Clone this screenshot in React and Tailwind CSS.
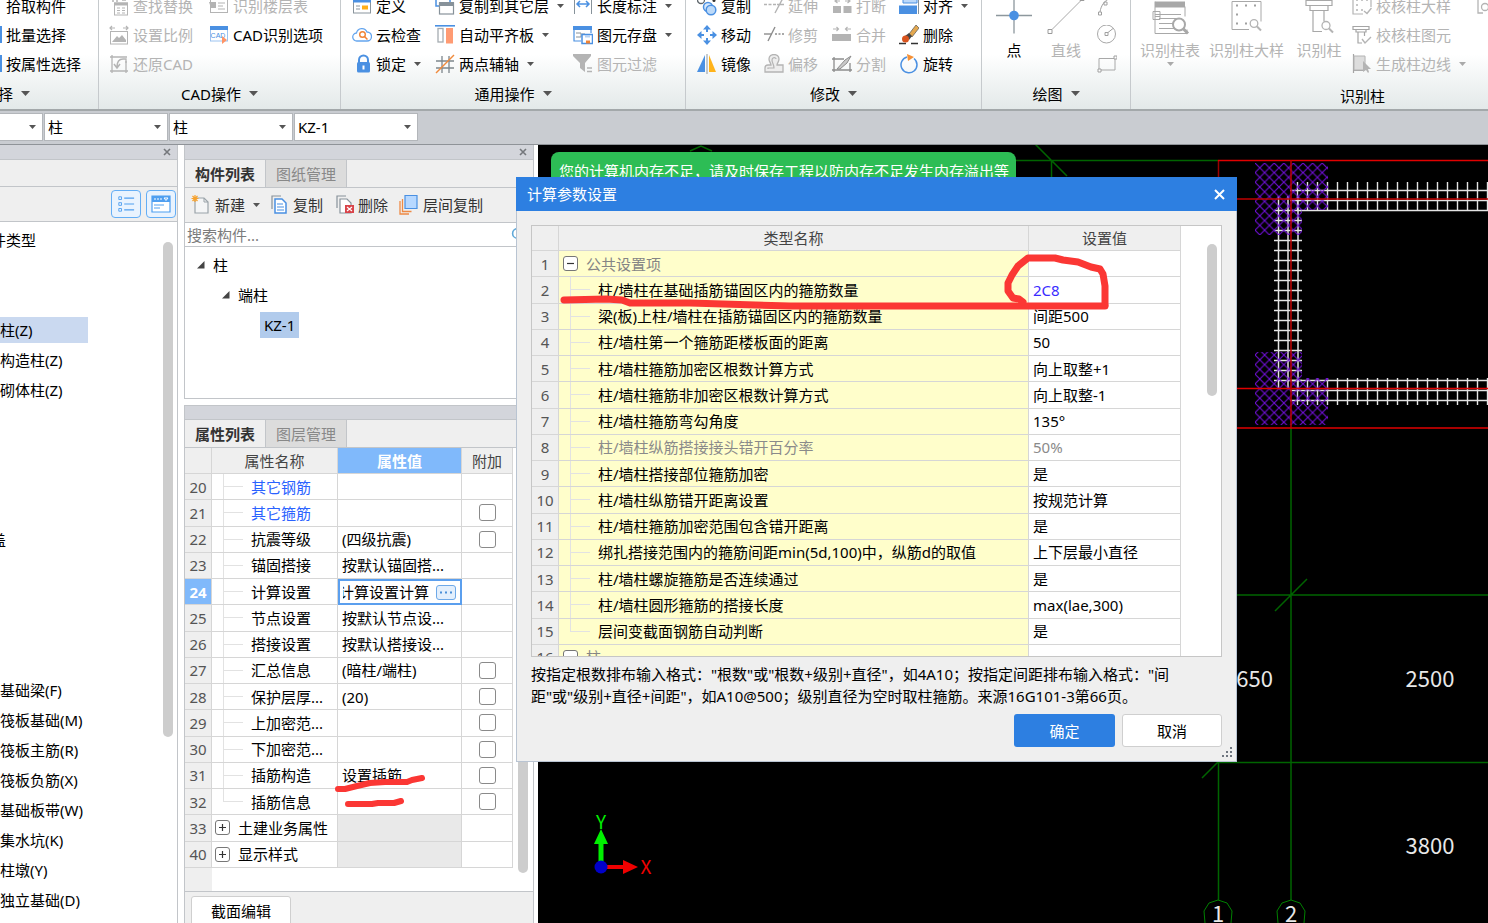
import { useState } from "react";

const BLUE = "#4a90e2";
const GRAY = "#b4b4b4";

function Icon({ children, className = "h-5 w-5" }) {
  return (
    <svg className={`shrink-0 ${className}`} viewBox="0 0 20 20" fill="none" aria-hidden="true">
      {children}
    </svg>
  );
}

function Caret({ color = "#555", small = false }) {
  return (
    <svg className={`shrink-0 ${small ? "h-1 w-[7px]" : "h-[5px] w-[9px]"}`} viewBox="0 0 9 5" preserveAspectRatio="none" aria-hidden="true">
      <path d="M0 0h9L4.500 5z" fill={color} />
    </svg>
  );
}

const icons = {
  pick: <Icon />,
  batch: <Icon><rect x="3" y="2" width="16" height="15" stroke={BLUE} strokeWidth="2" /><path d="M3 3h17" stroke={BLUE} strokeWidth="4" /></Icon>,
  findReplace: (
    <Icon>
      <path d="M4 6v-6h4v6M11 1h5v3M13 4h4" stroke={GRAY} strokeWidth="1.500" />
      <rect x="5.500" y="7" width="13" height="12" stroke={GRAY} />
      <path d="M5 8h14" stroke={GRAY} strokeWidth="3" />
      <path d="M8 12h3M8 14.500h3M8 17h3M13 12h3M13 14.500h3M13 17h3" stroke={GRAY} strokeWidth="1.200" />
    </Icon>
  ),
  scale: (
    <Icon>
      <path d="M1 3h5M3 1L1 3l2 2M19 3h-5M17 1l2 2-2 2" stroke={GRAY} strokeWidth="1.200" />
      <rect x="1.500" y="6.500" width="17" height="12.500" stroke={GRAY} />
      <path d="M3 17l5-6 2 2 3-3 4 5v2z" fill={GRAY} />
    </Icon>
  ),
  restore: (
    <Icon>
      <path d="M3 1v18M1 3h17M17 7v12M1 17h18" stroke={GRAY} strokeWidth="1.300" />
      <path d="M14 5c-4 0-6 3-6 8M5 10l3 4 3-4" stroke={GRAY} strokeWidth="1.500" />
      <path d="M14 5h3v4" stroke={GRAY} strokeWidth="1.300" />
    </Icon>
  ),
  floorTable: (
    <Icon>
      <rect x="1.500" y="3" width="17" height="13.500" stroke={GRAY} />
      <path d="M0 6h7v6H2z" fill={GRAY} />
      <path d="M9 7h7M9 10h5M9 13h7" stroke={GRAY} strokeWidth="1.200" />
    </Icon>
  ),
  cad: (
    <Icon>
      <rect x="1.500" y="2" width="17" height="14" fill="#fff" stroke="#9cc3f0" />
      <path d="M1 3h18" stroke={BLUE} strokeWidth="4" />
      <text x="9" y="13" textAnchor="middle" fontSize="7" fontFamily="Liberation Sans, sans-serif" fill={BLUE}>CAD</text>
      <path d="M13 11l5 4-5 4z" fill="#ff9466" />
    </Icon>
  ),
  define: (
    <Icon>
      <rect x="1.500" y="2" width="17" height="15" fill="#fff" stroke="#8a959d" />
      <path d="M1 4.500h18" stroke={BLUE} strokeWidth="4" />
      <path d="M4 10h4M4 13h4" stroke="#8a959d" />
      <path d="M10 11.500h6" stroke="#ffae19" strokeWidth="4" />
    </Icon>
  ),
  cloud: (
    <Icon>
      <path d="M5 16a4 4 0 0 1-.5-8A5.500 5.500 0 0 1 15 7a4.500 4.500 0 0 1 0 9z" stroke="#64a5ee" strokeWidth="1.300" />
      <circle cx="10.500" cy="9.500" r="2.800" stroke="#f08334" strokeWidth="1.400" />
      <path d="M12.500 11.500l3 3" stroke="#f08334" strokeWidth="1.500" />
    </Icon>
  ),
  lock: (
    <Icon>
      <path d="M7 9V6a4.500 4.500 0 0 1 9 0v3" stroke={BLUE} strokeWidth="2" />
      <rect x="5" y="8" width="13" height="10.500" rx="1.500" fill={BLUE} />
      <path d="M11.500 11.500v4" stroke="#fff" strokeWidth="2" />
    </Icon>
  ),
  copyFloor: (
    <Icon>
      <rect x="1" y="-3" width="14" height="13" stroke={BLUE} strokeWidth="1.500" />
      <rect x="4.500" y="7" width="14" height="11" fill="#fff" stroke="#87929a" strokeWidth="1.200" />
      <path d="M4 8h15" stroke="#87929a" strokeWidth="4" />
    </Icon>
  ),
  alignSlab: (
    <Icon>
      <path d="M0 .800h20" stroke={BLUE} strokeWidth="1.600" />
      <rect x="3" y="3.500" width="5" height="13.500" stroke="#a5acb1" strokeWidth="1.300" />
      <path d="M11 3h7v15.500h-7z" fill="#ff9b73" />
    </Icon>
  ),
  axis: (
    <Icon>
      <path d="M7 2v17M14 2v17M1 7h18M1 14h18" stroke="#7d868c" strokeWidth="1.300" />
      <path d="M1 19L19 1" stroke="#f08a3c" strokeWidth="1.500" />
    </Icon>
  ),
  measure: (
    <Icon>
      <path d="M1.500-2v20M18.500-2v20" stroke="#87929a" />
      <path d="M4 8h12M7 5L4 8l3 3M13 5l3 3-3 3" stroke={BLUE} strokeWidth="1.500" />
    </Icon>
  ),
  save: (
    <Icon>
      <path d="M8 16H1V2h17v6" stroke={BLUE} strokeWidth="1.200" />
      <path d="M0 3h19" stroke={BLUE} strokeWidth="4" />
      <path d="M3 8h5v4H3M9 9h3" stroke="#87929a" />
      <rect x="9" y="9.500" width="10.500" height="9" fill="#fff" stroke={BLUE} strokeWidth="1.500" />
      <path d="M12 10h5v2.500h-5z" fill="#b7d2f3" />
      <path d="M13 17h4" stroke="#f08334" strokeWidth="3" />
    </Icon>
  ),
  filter: (
    <Icon>
      <path d="M0 0h18v2l-6 7v9l-5-4V9L0 2z" fill={GRAY} />
      <path d="M14 14h5M14 17.500h5" stroke={GRAY} strokeWidth="1.300" />
    </Icon>
  ),
  copy: (
    <Icon>
      <circle cx="4" cy="4" r="3.500" stroke="#5f676c" strokeWidth="1.300" />
      <circle cx="17" cy="4.500" r="1.500" fill="#333" />
      <circle cx="11" cy="11" r="4.500" fill="#d8e9fb" stroke={BLUE} strokeWidth="1.500" />
      <circle cx="14" cy="14" r="4.800" fill="#bcd9f8" stroke={BLUE} strokeWidth="1.500" />
    </Icon>
  ),
  move: (
    <Icon>
      <path d="M10 0l4 4.500h-3V7H9V4.500H6zM10 20l4-4.500h-3V13H9v2.500H6zM0 10l4.500-4v3H7v2H4.500v3zM20 10l-4.500-4v3H13v2h2.500v3z" fill={BLUE} />
    </Icon>
  ),
  mirror: (
    <Icon>
      <path d="M8 1v17H0z" fill={BLUE} />
      <path d="M12 1v17h7z" fill="#ffb31a" />
      <path d="M10 0v20" stroke="#8f989e" />
    </Icon>
  ),
  extend: (
    <Icon>
      <path d="M0 8.500h12" stroke={GRAY} strokeWidth="1.400" strokeDasharray="3 1.500" />
      <path d="M13 8.500h7M19 2l-8 15" stroke={GRAY} strokeWidth="1.400" />
    </Icon>
  ),
  trim: (
    <Icon>
      <path d="M0 9h8" stroke="#8d8d8d" strokeWidth="1.400" />
      <path d="M11 9h9" stroke="#8d8d8d" strokeWidth="1.400" strokeDasharray="2 1.500" />
      <path d="M11 2L4 16" stroke="#8d8d8d" strokeWidth="1.400" />
    </Icon>
  ),
  offset: (
    <Icon>
      <path d="M1 18v-4c0-2 1-3 3-3h3c0-2-2-3-2-6 0-6 10-6 10 0 0 3-2 4-2 6h6v7z" fill="#ededed" stroke={GRAY} strokeWidth="1.300" />
      <path d="M4 15v-1h6c0-4-2-5-2-8 0-3 4-3 4-1" stroke={GRAY} strokeWidth="1.200" />
    </Icon>
  ),
  breakApart: (
    <Icon>
      <path d="M1 10h8v7H1zM11.500 10h8v7h-8z" fill={GRAY} />
      <path d="M3 5h5M5.500 3L3 5l2.500 2M18 5h-5M15.500 3L18 5l-2.500 2" stroke={GRAY} strokeWidth="1.200" />
    </Icon>
  ),
  merge: (
    <Icon>
      <path d="M0 9h19v7H0z" fill={GRAY} />
      <path d="M1 4h6M4.500 2l2 2-2 2M19 4h-6M15.500 2l-2 2 2 2" stroke={GRAY} strokeWidth="1.200" />
    </Icon>
  ),
  split: (
    <Icon>
      <path d="M2 3v15M0 5h12M0 16h20M18 9v9" stroke="#8d8d8d" strokeWidth="1.300" />
      <path d="M5 15l8-9 6-4-4 7-7 6z" fill="#c9c9c9" stroke="#8d8d8d" />
    </Icon>
  ),
  align: (
    <Icon>
      <path d="M19.500 0v18" stroke="#87929a" />
      <path d="M4-4h14V7H4z" fill="#bcd9fa" stroke={BLUE} />
      <path d="M0 9.500h18V18H0z" fill={BLUE} />
    </Icon>
  ),
  erase: (
    <Icon>
      <path d="M0 18.500h7M12 18.500h7" stroke="#333" strokeWidth="1.300" />
      <path d="M10 9l7-9 3 3-7 9z" fill="#e4a84f" stroke="#555" strokeWidth=".700" />
      <path d="M6 11l4-3 3 3-3 4z" fill="#444" />
      <circle cx="6.500" cy="14" r="3.500" fill="#d9541e" />
    </Icon>
  ),
  rotate: (
    <Icon>
      <path d="M15 4.500a8 8 0 1 1-7-1.500" stroke={BLUE} strokeWidth="1.500" />
      <path d="M8 0l7 3-6 4z" fill="#f59036" />
    </Icon>
  ),
  checkSample: (
    <Icon>
      <path d="M11 18H1V-2h18v13" stroke={GRAY} strokeWidth="1.200" />
      <path d="M4 4h2M9 4h2M14 4h2M4 9h2M4 14h2M9 14h2" stroke={GRAY} strokeWidth="1.500" />
      <path d="M12 15l3 2.500L19.500 12" stroke={GRAY} strokeWidth="1.400" />
    </Icon>
  ),
  checkElement: (
    <Icon>
      <path d="M1 1.500h16v3H1zM4 4.500h10v2.500H4zM6 7v11h4M12.500 7v4" stroke="#a5a5a5" strokeWidth="1.200" />
      <path d="M10 14l3 4 6-6" stroke={GRAY} strokeWidth="1.400" />
    </Icon>
  ),
  edge: (
    <Icon>
      <path d="M1.500 0v19M1 16.500h10M12.500 3v5" stroke="#a5a5a5" strokeWidth="1.200" />
      <path d="M2 2h11v14H2z" fill="#ddd" stroke={GRAY} />
      <path d="M11 7v11l3-2 2 3 1-1-1-3h3z" fill={GRAY} />
    </Icon>
  ),
  moreColumn: (
    <Icon>
      <path d="M0-1h16v4H0zM4 3v14h5" stroke={GRAY} strokeWidth="1.300" />
      <circle cx="11" cy="11" r="3.500" stroke={GRAY} strokeWidth="1.300" />
    </Icon>
  ),
};

function Tool({ icon, label, disabled, caret }) {
  return (
    <button type="button" disabled={disabled} className={`flex h-[29px] items-center gap-1 whitespace-nowrap ${disabled ? "text-[#b4b4b4]" : "text-black"}`}>
      {icons[icon]}
      <span>{label}</span>
      {caret && <span className="ml-1"><Caret small color={disabled ? "#aaa" : "#555"} /></span>}
    </button>
  );
}

function ToolColumn({ tools, className = "" }) {
  return (
    <div className={`flex shrink-0 flex-col items-start ${className}`}>
      {tools.map((t) => <Tool key={t.label} {...t} />)}
    </div>
  );
}

function BigTool({ label, disabled, caret, className, children }) {
  return (
    <button type="button" disabled={disabled} className={`flex shrink-0 flex-col items-center whitespace-nowrap ${className} ${disabled ? "text-[#b4b4b4]" : "text-black"}`}>
      <svg className="h-[47px] w-10" viewBox="0 0 40 46" fill="none" aria-hidden="true">{children}</svg>
      <span className="leading-6">{label}</span>
      {caret && <Caret small color="#aaa" />}
    </button>
  );
}

function Group({ title, className, caret = true, children }) {
  return (
    <section className={`flex shrink-0 flex-col border-r border-[#c6cacd] ${className}`}>
      <div className="flex h-[87px]">{children}</div>
      <button type="button" className={`flex h-8 items-center justify-center gap-2 ${caret ? "pb-px" : "pt-1"}`}>
        {title}
        {caret && <Caret />}
      </button>
    </section>
  );
}

function Ribbon() {
  return (
    <header className="h-[111px] shrink-0 overflow-hidden border-b-2 border-[#a3a8aa] bg-linear-to-b from-white from-50% to-[#e3e9e9]">
      <div className="-mt-[9px] flex">
        <Group title="选择" className="-ml-[85px] w-[184px]">
          <ToolColumn className="pl-[67px]" tools={[
            { icon: "pick", label: "拾取构件" },
            { icon: "batch", label: "批量选择" },
            { icon: "batch", label: "按属性选择" },
          ]} />
        </Group>
        <Group title="CAD操作" className="w-[242px]">
          <ToolColumn className="w-[110px] pl-[10px]" tools={[
            { icon: "findReplace", label: "查找替换", disabled: true },
            { icon: "scale", label: "设置比例", disabled: true },
            { icon: "restore", label: "还原CAD", disabled: true },
          ]} />
          <ToolColumn tools={[
            { icon: "floorTable", label: "识别楼层表", disabled: true },
            { icon: "cad", label: "CAD识别选项" },
          ]} />
        </Group>
        <Group title="通用操作" className="w-[345px]">
          <ToolColumn className="w-[94px] pl-[11px]" tools={[
            { icon: "define", label: "定义" },
            { icon: "cloud", label: "云检查" },
            { icon: "lock", label: "锁定", caret: true },
          ]} />
          <ToolColumn className="w-[138px]" tools={[
            { icon: "copyFloor", label: "复制到其它层", caret: true },
            { icon: "alignSlab", label: "自动平齐板", caret: true },
            { icon: "axis", label: "两点辅轴", caret: true },
          ]} />
          <ToolColumn tools={[
            { icon: "measure", label: "长度标注", caret: true },
            { icon: "save", label: "图元存盘", caret: true },
            { icon: "filter", label: "图元过滤", disabled: true },
          ]} />
        </Group>
        <Group title="修改" className="w-[296px]">
          <ToolColumn className="w-[78px] pl-[11px]" tools={[
            { icon: "copy", label: "复制" },
            { icon: "move", label: "移动" },
            { icon: "mirror", label: "镜像" },
          ]} />
          <ToolColumn className="w-[68px]" tools={[
            { icon: "extend", label: "延伸", disabled: true },
            { icon: "trim", label: "修剪", disabled: true },
            { icon: "offset", label: "偏移", disabled: true },
          ]} />
          <ToolColumn className="w-[67px]" tools={[
            { icon: "breakApart", label: "打断", disabled: true },
            { icon: "merge", label: "合并", disabled: true },
            { icon: "split", label: "分割", disabled: true },
          ]} />
          <ToolColumn tools={[
            { icon: "align", label: "对齐", caret: true },
            { icon: "erase", label: "删除" },
            { icon: "rotate", label: "旋转" },
          ]} />
        </Group>
        <Group title="绘图" className="w-[149px]">
          <BigTool label="点" className="ml-3 w-10">
            <path d="M20 6v36M2 24h36" stroke="#8d979d" strokeWidth="1.300" />
            <circle cx="20" cy="24" r="4.800" fill={BLUE} />
          </BigTool>
          <BigTool label="直线" disabled className="ml-3 w-10">
            <path d="M6 38L35 9" stroke="#a8a8a8" />
            <path d="M2 38h4v4H2zM34 5h4v4h-4z" stroke="#9a9a9a" />
          </BigTool>
          <div className="ml-[11px] flex flex-col text-[#a8a8a8]">
            <button type="button" aria-label="弧" className="flex h-[29px] items-center">
              <Icon><path d="M3 16C4 9 8 4 14 2M1.500 16h3v3h-3zM7 6h3v3H7z" stroke="#a0a0a0" /></Icon>
            </button>
            <button type="button" aria-label="圆" className="flex h-[29px] items-center">
              <Icon><circle cx="9.500" cy="9" r="9" stroke="#a8a8a8" /><path d="M8 7.500h3v3H8zM11 7.500l5-4" stroke="#a0a0a0" /></Icon>
            </button>
            <button type="button" aria-label="矩形" className="flex h-[29px] items-center">
              <Icon><path d="M2 4.500h16v11.500H2z" stroke="#a8a8a8" /><path d="M17 2h3v3h-3zM1 15h3v3H1z" fill="#fff" stroke="#a0a0a0" /></Icon>
            </button>
          </div>
        </Group>
        <Group title="识别柱" caret={false} className="w-[464px]">
          <BigTool label="识别柱表" disabled caret className="ml-2 w-[62px]">
            <path d="M5 10h30v6H5z" fill="#a8a8a8" />
            <path d="M5 10v32h32v-4M35 15v10M9 23h22M9 27h17M9 32h15M9 37h15" stroke="#a8a8a8" />
            <path d="M3 20h7v8H3zM5 23h5M5 25h5" stroke="#a8a8a8" />
            <circle cx="29" cy="33" r="6" fill="#fff" stroke="#a8a8a8" strokeWidth="2" />
            <path d="M33 37l5 5" stroke="#a8a8a8" strokeWidth="3" />
          </BigTool>
          <BigTool label="识别柱大样" disabled className="ml-2 w-[75px]">
            <path d="M22 38H5V10h29v20" stroke="#a8a8a8" />
            <path d="M9 14h2M18 14h2M27 14h2M9 23h2M9 32h2M18 32h2" stroke="#a0a0a0" strokeWidth="2" />
            <circle cx="27" cy="32" r="3.800" stroke={GRAY} strokeWidth="1.300" />
            <path d="M30 35l4 4" stroke={GRAY} strokeWidth="2" />
          </BigTool>
          <BigTool label="识别柱" disabled className="ml-3 w-[46px]">
            <path d="M7 9h26v5H7zM11 14h18v5H11zM14 19v21h9M25 19v11" stroke="#a8a8a8" strokeWidth="1.200" />
            <circle cx="27" cy="34" r="4" stroke={GRAY} strokeWidth="1.300" />
            <path d="M30 37l4 4" stroke={GRAY} strokeWidth="2" />
          </BigTool>
          <ToolColumn className="ml-[10px] w-[122px]" tools={[
            { icon: "checkSample", label: "校核柱大样", disabled: true },
            { icon: "checkElement", label: "校核柱图元", disabled: true },
            { icon: "edge", label: "生成柱边线", disabled: true, caret: true },
          ]} />
          <div className="flex h-[29px] items-center">{icons.moreColumn}</div>
        </Group>
      </div>
    </header>
  );
}

function Combo({ label, value, className }) {
  return (
    <div className={`relative h-7 border border-[#b3b6ba] bg-white ${className}`}>
      <select aria-label={label} defaultValue={value} className="h-full w-full appearance-none bg-transparent pl-[3px] outline-none">
        <option>{value}</option>
      </select>
      <span className="pointer-events-none absolute inset-y-0 right-[6px] flex items-center"><Caret small /></span>
    </div>
  );
}

function PanelStrip() {
  return (
    <div className="flex h-[15px] shrink-0 items-center justify-end border-b border-[#c2c5c9] bg-[#d3d5db] pr-[6px]">
      <button type="button" aria-label="关闭" className="flex">
        <svg className="h-2 w-2" viewBox="0 0 8 8" aria-hidden="true"><path d="M1 1l6 6M7 1L1 7" stroke="#75787c" strokeWidth="1.600" /></svg>
      </button>
    </div>
  );
}

const componentTypes = [
  { text: "构件类型", shift: "-ml-6" },
  {}, {},
  { text: "柱(Z)", selected: true },
  { text: "构造柱(Z)" },
  { text: "砌体柱(Z)" },
  {}, {}, {}, {},
  { text: "楼盖", shift: "-ml-6" },
  {}, {}, {}, {},
  { text: "基础梁(F)" },
  { text: "筏板基础(M)" },
  { text: "筏板主筋(R)" },
  { text: "筏板负筋(X)" },
  { text: "基础板带(W)" },
  { text: "集水坑(K)" },
  { text: "柱墩(Y)" },
  { text: "独立基础(D)" },
];

function TypePanel() {
  return (
    <aside className="flex w-[178px] shrink-0 flex-col overflow-hidden border-r border-[#c2c5c9] bg-white">
      <PanelStrip />
      <div className="h-[27px] shrink-0 border-b border-[#c2c5c9] bg-[#efefef]" />
      <div className="flex h-[35px] shrink-0 items-center justify-end gap-[5px] border-b border-[#c2c5c9] bg-[#efefef] pr-px">
        <button type="button" aria-label="列表" className="flex h-7 w-[30px] items-center justify-center rounded-sm border border-[#64aef5] bg-[#e9f3fe]">
          <Icon className="h-[18px] w-[18px]">
            <path d="M2 2h3v3H2zM2 8.500h3v3H2zM2 15h3v3H2z" stroke="#4f9ff0" />
            <path d="M8 3.500h11M8 10h11M8 16.500h11" stroke="#4f9ff0" strokeWidth="1.200" />
          </Icon>
        </button>
        <button type="button" aria-label="窗口" className="flex h-7 w-[30px] items-center justify-center rounded-sm border border-[#64aef5] bg-[#e9f3fe]">
          <Icon>
            <path d="M1 2h18v16H1z" fill="#fff" stroke="#4f9ff0" strokeWidth="1.200" />
            <path d="M1 2h18v6H1z" fill="#4f9ff0" />
            <path d="M3 5h2M6 5h2M9 5h2M13 4h4l-2 2.500z" stroke="#fff" />
            <path d="M3 11h10M3 14h6" stroke="#4f9ff0" />
          </Icon>
        </button>
      </div>
      <div className="flex justify-between pr-1">
        <ul className="w-[88px] pt-[3px]">
          {componentTypes.map((t, i) => (
            <li key={i} className="flex h-[30px] items-center whitespace-nowrap">
              <span className={`${t.shift ?? ""} ${t.selected ? "w-full bg-[#cad9f0] leading-[26px]" : ""}`}>{t.text}</span>
            </li>
          ))}
        </ul>
        <div className="mt-5 h-[495px] w-[10px] rounded-full bg-[#cdcdcd]" />
      </div>
    </aside>
  );
}

function Tabs({ items }) {
  return (
    <div className="flex h-7 shrink-0 border-b border-[#c2c5c9] bg-[#efefef]" role="tablist">
      {items.map((label, i) => (
        <button key={label} type="button" role="tab" aria-selected={i === 0}
          className={`w-[81px] border-r border-[#c2c5c9] ${i === 0 ? "font-bold text-[#333]" : "bg-[#dcdcdc] text-[#888]"}`}>
          {label}
        </button>
      ))}
    </div>
  );
}

function ToggleArrow() {
  return <svg className="h-2 w-2 shrink-0" viewBox="0 0 8 8" aria-hidden="true"><path d="M7.500 0v7.500H0z" fill="#444" /></svg>;
}

function ComponentPanel() {
  return (
    <section className="flex h-[254px] shrink-0 flex-col border border-t-0 border-[#c2c5c9] bg-white">
      <PanelStrip />
      <Tabs items={["构件列表", "图纸管理"]} />
      <div className="flex h-[35px] shrink-0 items-center border-b border-[#c2c5c9] bg-[#efefef] pl-[6px] text-[#333]">
        <button type="button" className="flex w-20 items-center gap-1">
          <Icon>
            <path d="M4 3h9l4 4v11H4z" fill="#f4f5f6" stroke="#9aa3a9" strokeWidth="1.200" />
            <path d="M13 3v4h4" stroke="#9aa3a9" />
            <path d="M4 0v7M.500 3.500h7M1.500 1l5 5M6.500 1l-5 5" stroke="#f7a12b" strokeWidth="1.200" />
          </Icon>
          新建
          <span className="ml-1"><Caret small /></span>
        </button>
        <button type="button" className="flex w-[65px] items-center gap-[2px]">
          <Icon>
            <path d="M1 14V1h9" stroke="#87929a" strokeWidth="1.200" />
            <path d="M4 4h7l4 4v10H4z" fill="#fff" stroke={BLUE} strokeWidth="1.500" />
            <path d="M6 9h6M6 12h7M6 15h7" stroke={BLUE} strokeWidth="1.200" />
          </Icon>
          复制
        </button>
        <button type="button" className="flex w-[63px] items-center gap-[2px]">
          <Icon>
            <path d="M1 13V1h9" stroke="#87929a" strokeWidth="1.200" />
            <path d="M4 4h7l4 4v10H4z" fill="#fff" stroke="#87929a" strokeWidth="1.200" />
            <path d="M9 10h9v8H9z" fill="#d9444a" />
            <path d="M11 12l5 4M16 12l-5 4" stroke="#fff" strokeWidth="1.200" />
          </Icon>
          删除
        </button>
        <button type="button" className="flex items-center gap-1">
          <Icon>
            <path d="M1 6v13h9M3.500 4v12.500h9" stroke="#ee8a45" strokeWidth="1.300" />
            <path d="M6 .500h12v13H6z" fill="#b7d8ff" stroke={BLUE} strokeWidth="1.200" />
          </Icon>
          层间复制
        </button>
      </div>
      <div className="flex h-6 shrink-0 items-center justify-between border-b border-[#c2c5c9] pr-[6px]">
        <input type="text" aria-label="搜索构件" placeholder="搜索构件..." className="w-full pl-[2px] outline-none placeholder:text-[#7c7c7c]" />
        <Icon className="h-4 w-4"><circle cx="8" cy="8" r="6" stroke="#5fa8d8" strokeWidth="2" /><path d="M12 12l6 6" stroke="#5fa8d8" strokeWidth="2" /></Icon>
      </div>
      <ul className="pt-[3px]">
        <li className="flex h-[30px] items-center gap-2 pl-3"><ToggleArrow />柱</li>
        <li className="flex h-[30px] items-center gap-2 pl-[37px]"><ToggleArrow />端柱</li>
        <li className="flex h-[30px] items-center pl-[75px]"><span className="bg-[#b1cbec] px-1 leading-[26px]">KZ-1</span></li>
      </ul>
    </section>
  );
}

const properties = [
  { no: 20, name: "其它钢筋", blue: true },
  { no: 21, name: "其它箍筋", blue: true, check: true },
  { no: 22, name: "抗震等级", value: "(四级抗震)", check: true },
  { no: 23, name: "锚固搭接", value: "按默认锚固搭..." },
  { no: 24, name: "计算设置", value: "计算设置计算", active: true },
  { no: 25, name: "节点设置", value: "按默认节点设..." },
  { no: 26, name: "搭接设置", value: "按默认搭接设..." },
  { no: 27, name: "汇总信息", value: "(暗柱/端柱)", check: true },
  { no: 28, name: "保护层厚...", value: "(20)", check: true },
  { no: 29, name: "上加密范...", check: true },
  { no: 30, name: "下加密范...", check: true },
  { no: 31, name: "插筋构造", value: "设置插筋", check: true },
  { no: 32, name: "插筋信息", check: true, last: true },
  { no: 33, name: "土建业务属性", group: true },
  { no: 40, name: "显示样式", group: true },
];

// tree guide: vertical trunk plus the branch to the label
function Guide({ last }) {
  return (
    <>
      <span className={`absolute left-[11px] top-0 border-l border-[#e2e2e2] ${last ? "h-3" : "bottom-0"}`} />
      <span className="absolute left-[11px] top-3 w-5 border-t border-[#e2e2e2]" />
    </>
  );
}

function Expander({ sign }) {
  return (
    <button type="button" aria-label={sign === "+" ? "展开" : "折叠"} className="flex h-[15px] w-[15px] shrink-0 items-center justify-center rounded-[3px] border border-[#777] bg-white">
      <svg className="h-[7px] w-[7px]" viewBox="0 0 7 7" aria-hidden="true">
        <path d={sign === "+" ? "M0 3.500h7M3.500 0v7" : "M0 3.500h7"} stroke="#333" strokeWidth="1.200" />
      </svg>
    </button>
  );
}

function PropertyPanel() {
  const [checked, setChecked] = useState({});
  const cell = "border-r border-b border-[#d6d6d6] p-0";
  return (
    <section className="flex min-h-0 flex-1 flex-col border border-b-0 border-[#c2c5c9] bg-[#efefef]">
      <div className="h-[14px] shrink-0 border-b border-[#c2c5c9] bg-[#d3d5db]" />
      <Tabs items={["属性列表", "图层管理"]} />
      <div className="flex shrink-0 border-b border-[#c2c5c9] bg-white">
        <table className="h-[443px] w-[328px] table-fixed border-separate border-spacing-0 whitespace-nowrap">
          <colgroup>
            <col className="w-[27px]" />
            <col className="w-[126px]" />
            <col className="w-[124px]" />
            <col className="w-[51px]" />
          </colgroup>
          <thead>
            <tr className="h-[26px] bg-[#efefef] text-[#444]">
              <th className={cell} aria-label="序号" />
              <th className={`${cell} font-normal`}>属性名称</th>
              <th className={`${cell} bg-[#80b9fb] font-bold text-white`}>属性值</th>
              <th className={`${cell} font-normal`}>附加</th>
            </tr>
          </thead>
          <tbody>
            {properties.map((p) => (
              <tr key={p.no} className="h-[26px]">
                <td className={`${cell} text-center ${p.active ? "bg-[#80b9fb] font-bold text-white" : "bg-[#efefef] text-[#555]"}`}>{p.no}</td>
                <td className={`${cell} relative`}>
                  {p.group ? (
                    <div className="flex items-center gap-2 pl-[3px]"><Expander sign="+" />{p.name}</div>
                  ) : (
                    <>
                      <Guide last={p.last} />
                      <span className={`pl-[39px] ${p.blue ? "text-[#2a62ff]" : ""}`}>{p.name}</span>
                    </>
                  )}
                </td>
                {p.active ? (
                  <td className="border-2 border-[#5b9fee] p-0">
                    <div className="flex items-center gap-[7px] pr-1 pl-[3px]">
                      <span className="flex min-w-0 flex-1 justify-end overflow-hidden">{p.value}</span>
                      <button type="button" aria-label="更多" className="flex h-[15px] w-5 shrink-0 items-center justify-center rounded-[3px] border border-[#6ea9e8] bg-[#e3effc]">
                        <svg className="h-[3px] w-3" viewBox="0 0 12 3" aria-hidden="true"><path d="M0 .500h2v2H0zM5 .500h2v2H5zM10 .500h2v2h-2z" fill="#4a8fd8" /></svg>
                      </button>
                    </div>
                  </td>
                ) : (
                  <td className={`${cell} ${p.group ? "bg-[#e9e9e9]" : ""}`}><span className="pl-1">{p.value}</span></td>
                )}
                <td className={cell}>
                  {p.check && (
                    <input type="checkbox" aria-label={p.name} checked={!!checked[p.no]}
                      onChange={(e) => setChecked({ ...checked, [p.no]: e.target.checked })}
                      className="mx-auto block h-[17px] w-[17px] appearance-none rounded-[3px] border border-[#8a8a8a] bg-white checked:bg-[#4a90e2]" />
                  )}
                </td>
              </tr>
            ))}
            <tr className="h-[23px]">
              <td className="bg-[#efefef] p-0" />
              <td colSpan={3} className="p-0" />
            </tr>
          </tbody>
        </table>
        <div className="mt-7 mb-[18px] ml-[5px] w-[10px] rounded-full bg-[#cdcdcd]" />
      </div>
      <div className="pt-1 pl-[6px]">
        <button type="button" className="h-[30px] w-[100px] rounded-[3px] border border-[#cfcfcf] bg-white">截面编辑</button>
      </div>
    </section>
  );
}

const topTicks = Array.from({ length: 20 }, (_, i) => 1297 + i * 10);
const sideTicks = Array.from({ length: 18 }, (_, i) => 210 + i * 10);

function Canvas() {
  return (
    <main className="relative min-w-0 flex-1 overflow-hidden bg-black">
      <svg className="absolute inset-0 h-full w-full" fill="none" aria-hidden="true">
        <defs>
          <pattern id="hatch" width="9.600" height="9.600" patternUnits="userSpaceOnUse" patternTransform="translate(1255 163)">
            <path d="M0 0l9.600 9.600M9.600 0L0 9.600" stroke="#6f0fd6" strokeWidth="1.100" />
          </pattern>
        </defs>
        <g transform="translate(-538 -145)">
          {/* axis grid */}
          <g stroke="#006400" strokeWidth="1.500">
            <path d="M1000 160.500h218M1051.500 160v20M1035 144l32 32M690 151l11-5 11 5" />
            <path d="M1291 428v472M1237 595h251M1275 611l32-32M1218 762.500h270M1218.500 762v138M1202 778l16-16" />
          </g>
          <path d="M1218 900l-9 3-5 8 1 12M1218 900l9 3 5 8-1 12M1291 900l-9 3-5 8 1 12M1291 900l9 3 5 8-1 12" stroke="#008000" />
          {/* walls */}
          <g stroke="#e4e4e4">
            <path d="M1290 190.500h198M1290 200.500h198M1300 210.500h188M1290 380.500h198M1290 390.500h198M1290 400.500h198" strokeWidth="1.400" />
            <path d="M1278.500 196v193M1288 196v193M1298 196v193" strokeWidth="1.500" />
            {topTicks.map((x) => <path key={x} d={`M${x}.500 182v28M${x}.500 378v27`} strokeWidth="1.400" />)}
            {sideTicks.map((y) => <path key={y} d={`M1274 ${y}.500h28`} strokeWidth="1.500" />)}
          </g>
          {/* columns */}
          <path d="M1255 163h73v47h-26v25h-47zM1255 352h47v26h26v47h-73z" fill="url(#hatch)" />
          <path d="M1218.500 160v30" stroke="#9c0000" strokeWidth="1.500" />
          <path d="M1218 160.500h270M1237 388.500h251M1237 428h251" stroke="#e00000" strokeWidth="1.300" />
          <path d="M1237 199h251M1291 160v268" stroke="#c00000" strokeWidth="1.500" />
          <g fill="#e8e8e8" fontSize="22" fontFamily="'Noto Sans CJK SC', sans-serif">
            <text x="1273" y="687" textAnchor="end">650</text>
            <text x="1430" y="687" textAnchor="middle">2500</text>
            <text x="1430" y="854" textAnchor="middle">3800</text>
            <text x="1218" y="922" textAnchor="middle">1</text>
            <text x="1291" y="922" textAnchor="middle">2</text>
          </g>
          {/* coordinate axes */}
          <path d="M601 862v-20" stroke="#00f000" strokeWidth="5" />
          <path d="M594 844l7-15 7 15z" fill="#00f000" />
          <path d="M606 867h20" stroke="#f00000" strokeWidth="4" />
          <path d="M623 860l15 7-15 7z" fill="#f00000" />
          <circle cx="601" cy="867" r="6.500" fill="#0000c8" />
          <g fontSize="19" fontFamily="'Noto Sans CJK SC', sans-serif" textAnchor="middle">
            <text x="601" y="829" fill="#00f000">Y</text>
            <text x="646" y="874" fill="#f00000">X</text>
          </g>
        </g>
      </svg>
      <div role="status" className="absolute top-[7px] left-[13px] w-[465px] rounded-lg bg-[#2dbd55] pt-[7px] pb-3 pl-2 leading-6 whitespace-nowrap text-white">
        您的计算机内存不足，请及时保存工程以防内存不足发生内存溢出等
      </div>
    </main>
  );
}

const settings = [
  { name: "公共设置项", group: true },
  { name: "柱/墙柱在基础插筋锚固区内的箍筋数量", value: "2C8", blue: true },
  { name: "梁(板)上柱/墙柱在插筋锚固区内的箍筋数量", value: "间距500" },
  { name: "柱/墙柱第一个箍筋距楼板面的距离", value: "50" },
  { name: "柱/墙柱箍筋加密区根数计算方式", value: "向上取整+1" },
  { name: "柱/墙柱箍筋非加密区根数计算方式", value: "向上取整-1" },
  { name: "柱/墙柱箍筋弯勾角度", value: "135°" },
  { name: "柱/墙柱纵筋搭接接头错开百分率", value: "50%", dim: true },
  { name: "柱/墙柱搭接部位箍筋加密", value: "是" },
  { name: "柱/墙柱纵筋错开距离设置", value: "按规范计算" },
  { name: "柱/墙柱箍筋加密范围包含错开距离", value: "是" },
  { name: "绑扎搭接范围内的箍筋间距min(5d,100)中，纵筋d的取值", value: "上下层最小直径" },
  { name: "柱/墙柱螺旋箍筋是否连续通过", value: "是" },
  { name: "柱/墙柱圆形箍筋的搭接长度", value: "max(lae,300)" },
  { name: "层间变截面钢筋自动判断", value: "是", last: true },
  { name: "柱", group: true },
];

function SettingsDialog() {
  const cell = "border-r border-b border-[#d6d6d6] p-0";
  return (
    <div role="dialog" aria-labelledby="dialog-title" className="absolute top-[177px] left-[516px] w-[721px] border border-t-0 border-[#b9c4d2] bg-[#efefef]">
      <div className="-mx-px flex h-[34px] items-center justify-between bg-[#2d7fe1] pr-3 pl-[11px] text-white">
        <h2 id="dialog-title">计算参数设置</h2>
        <button type="button" aria-label="关闭" className="flex">
          <svg className="h-[11px] w-[11px]" viewBox="0 0 11 11" aria-hidden="true"><path d="M1 1l9 9M10 1l-9 9" stroke="#fff" strokeWidth="2" /></svg>
        </button>
      </div>
      <div className="px-[14px] pt-[14px]">
        <div className="flex h-[432px] items-start overflow-hidden border border-[#c6c6c6] bg-white">
          <table className="h-[445px] min-w-0 flex-1 table-fixed border-separate border-spacing-0 whitespace-nowrap">
            <colgroup>
              <col className="w-[27px]" />
              <col />
              <col className="w-[152px]" />
            </colgroup>
            <thead>
              <tr className="h-[25px] bg-[#efefef] text-[#444]">
                <th className={cell} aria-label="序号" />
                <th className={`${cell} font-normal`}>类型名称</th>
                <th className={`${cell} font-normal`}>设置值</th>
              </tr>
            </thead>
            <tbody>
              {settings.map((s, i) => (
                <tr key={i} className="h-[26px]">
                  <td className={`${cell} bg-[#efefef] text-center text-[#555]`}>{i + 1}</td>
                  <td className={`${cell} relative bg-[#fffecb]`}>
                    {s.group ? (
                      <div className="flex items-center gap-2 pl-1 text-[#858585]"><Expander sign="-" />{s.name}</div>
                    ) : (
                      <>
                        <Guide last={s.last} />
                        <span className={`pl-[39px] ${s.dim ? "text-[#8a8a8a]" : ""}`}>{s.name}</span>
                      </>
                    )}
                  </td>
                  <td className={cell}>
                    <span className={`pl-1 ${s.blue ? "text-[#3a2cff]" : s.dim ? "text-[#8a8a8a]" : ""}`}>{s.value}</span>
                  </td>
                </tr>
              ))}
            </tbody>
          </table>
          <div className="mt-[18px] mr-1 ml-[26px] h-[152px] w-[10px] rounded-full bg-[#cdcdcd]" />
        </div>
        <p className="mt-[6px] pr-8 leading-[22px]">
          按指定根数排布输入格式："根数"或"根数+级别+直径"，如4A10；按指定间距排布输入格式："间距"或"级别+直径+间距"，如A10@500；级别直径为空时取柱箍筋。来源16G101-3第66页。
        </p>
        <div className="mt-[7px] flex justify-end gap-[7px]">
          <button type="button" className="h-[33px] w-[101px] rounded-[3px] bg-[#2d7fe1] text-white">确定</button>
          <button type="button" className="h-[33px] w-[100px] rounded-[3px] border border-[#cfcfcf] bg-white">取消</button>
        </div>
      </div>
      <div className="flex h-[14px] justify-end pr-1">
        <svg className="h-[10px] w-[10px]" viewBox="0 0 10 10" aria-hidden="true">
          <path d="M8 0h2v2H8zM8 4h2v2H8zM8 8h2v2H8zM4 4h2v2H4zM4 8h2v2H4zM0 8h2v2H0z" fill="#6f7680" />
        </svg>
      </div>
    </div>
  );
}

// freehand red marker strokes drawn over the window
function Markup() {
  return (
    <svg className="pointer-events-none absolute inset-0 h-full w-full" fill="none" stroke="#fb3734" strokeWidth="6" strokeLinecap="round" strokeLinejoin="round" aria-hidden="true">
      <path d="M564 300l42-1 16 1 8 3h60l100 3h315" strokeWidth="7" />
      <path d="M1023 302l-4-3-6-1-5-7 0-8 4-8 6-9 10-8h27l8 2 15 2 13 5 9 2 3 5 2 12v19" strokeWidth="7" />
      <path d="M338 789h7l12-3 13-3 15-1h22l5-2 10-2" />
      <path d="M348 804h24l6-1h16l7-2" />
    </svg>
  );
}

export default function App() {
  return (
    <div className="relative flex h-screen flex-col overflow-hidden bg-[#c9ccd1] font-['Noto_Sans','Noto_Sans_CJK_SC',sans-serif] text-[15px] leading-5 text-black">
      <Ribbon />
      <div className="flex h-[34px] shrink-0 items-center gap-px border-b border-[#8f9398] pb-[2px]">
        <Combo label="楼层" value="" className="w-[43px] border-l-0" />
        <Combo label="构件大类" value="柱" className="w-[124px]" />
        <Combo label="构件类型" value="柱" className="w-[124px]" />
        <Combo label="构件名称" value="KZ-1" className="w-[124px]" />
      </div>
      <div className="flex min-h-0 flex-1 bg-white">
        <TypePanel />
        <div className="ml-[6px] mr-1 flex w-[350px] shrink-0 flex-col gap-[6px]">
          <ComponentPanel />
          <PropertyPanel />
        </div>
        <Canvas />
      </div>
      <SettingsDialog />
      <Markup />
    </div>
  );
}
